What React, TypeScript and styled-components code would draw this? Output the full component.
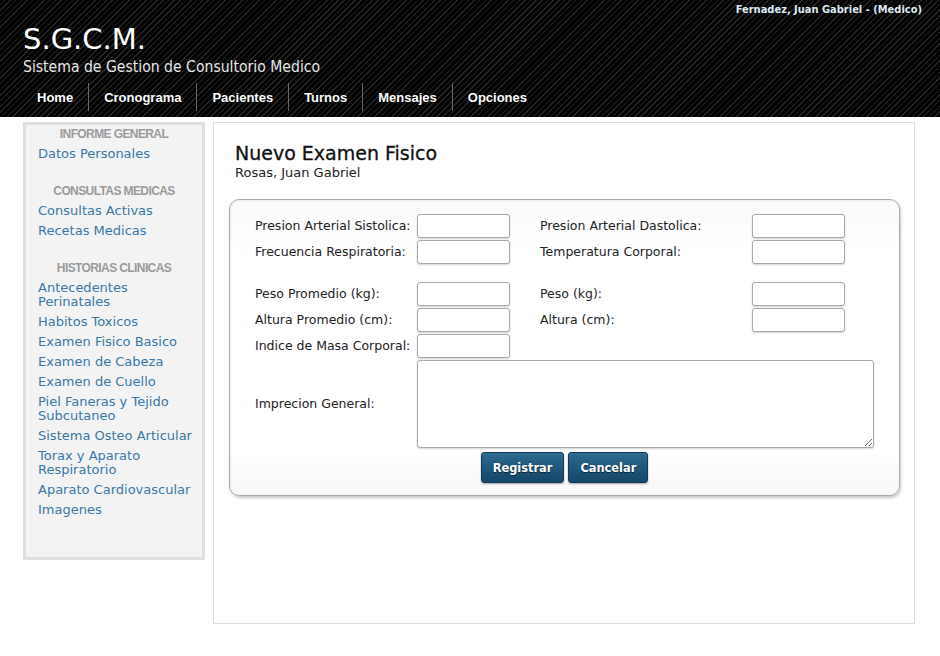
import React from "react";
import styled, { createGlobalStyle } from "styled-components";

const GlobalStyle = createGlobalStyle`
  html, body { margin: 0; padding: 0; background: #fff; }
  body { font-family: "DejaVu Sans", Verdana, sans-serif; font-size: 13px; color: #222; }
  * { box-sizing: border-box; }
`;

const Header = styled.header`
  height: 117px;
  background-color: #000;
  background-image: repeating-linear-gradient(135deg, #000 0px, #000 3px, #262626 3px, #262626 4px);
  display: flex;
  flex-direction: column;
  padding: 0 18px 0 22px;
`;

const UserLine = styled.div`
  align-self: flex-end;
  margin-top: 3px;
  height: 14px;
  font-family: "DejaVu Sans Condensed", "DejaVu Sans", sans-serif;
  font-weight: bold;
  font-size: 11px;
  line-height: 14px;
  color: #dce8f2;
`;

const Brand = styled.h1`
  margin: 5px 0 0 1px;
  font-family: "DejaVu Sans", Verdana, sans-serif;
  font-weight: normal;
  font-size: 29px;
  line-height: 34px;
  color: #fff;
`;

const Tagline = styled.div`
  margin: 2px 0 0 1px;
  font-family: "DejaVu Sans Condensed", "DejaVu Sans", sans-serif;
  font-size: 15.6px;
  line-height: 18px;
  color: #e8e8e8;
`;

const Nav = styled.nav`
  display: flex;
  margin-top: 7px;
  height: 28px;
  align-items: stretch;
`;

const NavItem = styled.a<{ $sep?: boolean }>`
  display: flex;
  align-items: center;
  padding: 0 15px;
  font-family: "Liberation Sans", Arial, sans-serif;
  font-weight: bold;
  font-size: 13px;
  color: #fff;
  text-decoration: none;
  text-shadow: 0 1px 1px #000;
  border-left: ${(p) => (p.$sep ? "1px solid #666" : "none")};
`;

const Page = styled.div`
  display: flex;
  align-items: flex-start;
  gap: 8px;
  padding: 5px 0 0 23px;
`;

const Sidebar = styled.aside`
  width: 182px;
  border: 3px solid #dedede;
  background: #f3f3f3;
  padding: 2px 2px 40px 12px;
  display: flex;
  flex-direction: column;
`;

const SideHeading = styled.div<{ $first?: boolean }>`
  margin-top: ${(p) => (p.$first ? "0" : "23px")};
  padding-right: 10px;
  text-align: center;
  font-family: "Liberation Sans", Arial, sans-serif;
  font-weight: bold;
  font-size: 12px;
  letter-spacing: -0.6px;
  line-height: 14px;
  color: #9a9a9a;
`;

const SideLink = styled.a`
  display: block;
  margin-top: 6px;
  font-size: 13px;
  line-height: 14px;
  color: #3a78a6;
  text-decoration: none;
`;

const Main = styled.main`
  width: 702px;
  height: 502px;
  border: 1px solid #dcdcdc;
  background: #fff;
  padding: 0 14px 0 15px;
`;

const Title = styled.h2`
  margin: 19px 0 0 6px;
  font-family: "DejaVu Sans", Verdana, sans-serif;
  font-weight: normal;
  font-size: 19px;
  line-height: 22px;
  color: #111;
  -webkit-text-stroke: 0.3px #111;
`;

const Subtitle = styled.div`
  margin: 1px 0 0 6px;
  font-size: 13px;
  line-height: 16px;
  color: #222;
`;

const FormBox = styled.form`
  margin-top: 18px;
  border: 1px solid #a9a9a9;
  border-radius: 10px;
  background: linear-gradient(to bottom, #fafafa 0%, #ffffff 20%, #ffffff 85%, #f7f7f7 100%);
  box-shadow: 1px 2px 3px rgba(0, 0, 0, 0.22), inset 1px 1px 2px rgba(0, 0, 0, 0.06);
  padding: 14px 24px 12px 25px;
`;

const Grid = styled.div`
  display: grid;
  grid-template-columns: 162px 93px 30px 212px 122px;
  grid-auto-rows: auto;
  row-gap: 2px;
  align-items: center;
`;

const Label = styled.label<{ $col?: number }>`
  grid-column: ${(p) => p.$col ?? 1};
  font-size: 12.5px;
  line-height: 16px;
  color: #222;
  white-space: nowrap;
`;

const Field = styled.input<{ $col?: number }>`
  grid-column: ${(p) => p.$col ?? 2};
  width: 93px;
  height: 24px;
  border: 1px solid #a8a8a8;
  border-radius: 3px;
  background: #fff;
  box-shadow: 0 1px 2px rgba(0, 0, 0, 0.18);
  font-family: inherit;
  font-size: 13px;
  padding: 2px 4px;
  outline: none;
`;

const Spacer = styled.div`
  grid-column: 1 / -1;
  height: 14px;
`;

const Area = styled.textarea`
  grid-column: 2 / 6;
  width: 457px;
  height: 88px;
  border: 1px solid #a8a8a8;
  border-radius: 3px;
  background: #fff;
  box-shadow: 0 1px 2px rgba(0, 0, 0, 0.18);
  font-family: inherit;
  font-size: 13px;
  resize: both;
  outline: none;
  display: block;
`;

const Buttons = styled.div`
  grid-column: 1 / -1;
  display: flex;
  justify-content: center;
  gap: 4px;
  margin-top: 2px;
`;

const Button = styled.button`
  height: 31px;
  padding: 0 11px;
  border: 1px solid #0f3a55;
  border-radius: 3px;
  background: linear-gradient(to bottom, #2e6c92 0%, #1d5579 55%, #15476a 100%);
  box-shadow: 0 1px 2px rgba(0, 0, 0, 0.35);
  color: #fff;
  font-family: "DejaVu Sans", Verdana, sans-serif;
  font-weight: bold;
  font-size: 11.4px;
  text-shadow: 0 1px 1px rgba(0, 0, 0, 0.6);
  cursor: pointer;
`;

const navItems = ["Home", "Cronograma", "Pacientes", "Turnos", "Mensajes", "Opciones"];

const sections: { title: string; links: string[] }[] = [
  { title: "INFORME GENERAL", links: ["Datos Personales"] },
  { title: "CONSULTAS MEDICAS", links: ["Consultas Activas", "Recetas Medicas"] },
  {
    title: "HISTORIAS CLINICAS",
    links: [
      "Antecedentes Perinatales",
      "Habitos Toxicos",
      "Examen Fisico Basico",
      "Examen de Cabeza",
      "Examen de Cuello",
      "Piel Faneras y Tejido Subcutaneo",
      "Sistema Osteo Articular",
      "Torax y Aparato Respiratorio",
      "Aparato Cardiovascular",
      "Imagenes",
    ],
  },
];

export default function App() {
  return (
    <>
      <GlobalStyle />
      <Header>
        <UserLine>Fernadez, Juan Gabriel - (Medico)</UserLine>
        <Brand>S.G.C.M.</Brand>
        <Tagline>Sistema de Gestion de Consultorio Medico</Tagline>
        <Nav>
          {navItems.map((n, i) => (
            <NavItem key={n} href="#" $sep={i > 0}>
              {n}
            </NavItem>
          ))}
        </Nav>
      </Header>
      <Page>
        <Sidebar>
          {sections.map((s, i) => (
            <React.Fragment key={s.title}>
              <SideHeading $first={i === 0}>{s.title}</SideHeading>
              {s.links.map((l) => (
                <SideLink key={l} href="#">
                  {l}
                </SideLink>
              ))}
            </React.Fragment>
          ))}
        </Sidebar>
        <Main>
          <Title>Nuevo Examen Fisico</Title>
          <Subtitle>Rosas, Juan Gabriel</Subtitle>
          <FormBox onSubmit={(e) => e.preventDefault()}>
            <Grid>
              <Label>Presion Arterial Sistolica:</Label>
              <Field />
              <Label $col={4}>Presion Arterial Dastolica:</Label>
              <Field $col={5} />
              <Label>Frecuencia Respiratoria:</Label>
              <Field />
              <Label $col={4}>Temperatura Corporal:</Label>
              <Field $col={5} />
              <Spacer />
              <Label>Peso Promedio (kg):</Label>
              <Field />
              <Label $col={4}>Peso (kg):</Label>
              <Field $col={5} />
              <Label>Altura Promedio (cm):</Label>
              <Field />
              <Label $col={4}>Altura (cm):</Label>
              <Field $col={5} />
              <Label>Indice de Masa Corporal:</Label>
              <Field />
              <Label>Imprecion General:</Label>
              <Area />
              <Buttons>
                <Button type="submit">Registrar</Button>
                <Button type="button">Cancelar</Button>
              </Buttons>
            </Grid>
          </FormBox>
        </Main>
      </Page>
    </>
  );
}
